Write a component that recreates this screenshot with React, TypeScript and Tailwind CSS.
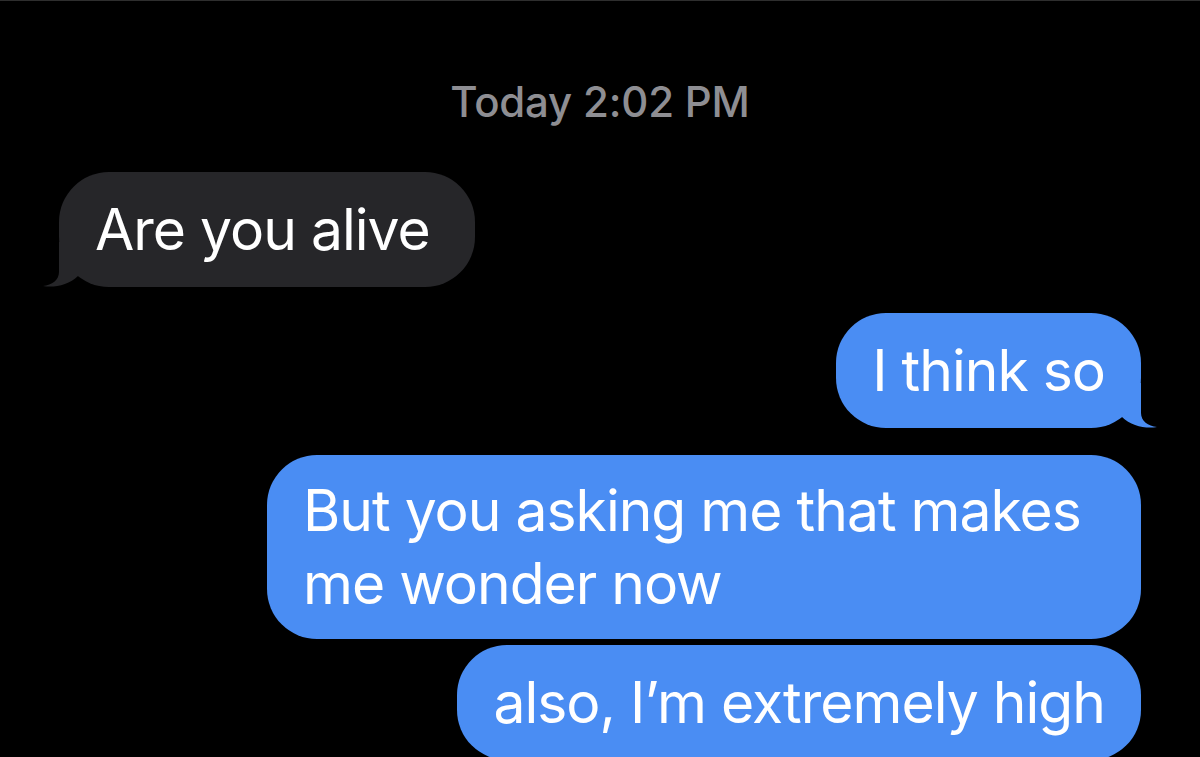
import React from "react";

type Msg = {
  text: React.ReactNode;
  mine: boolean;
  tail?: boolean;
  gap: string;
  width?: string;
  pad?: string;
};

const messages: Msg[] = [
  { text: "Are you alive", mine: false, tail: true, gap: "mt-[49px]", width: "w-[416px]" },
  { text: "I think so", mine: true, tail: true, gap: "mt-[26px]" },
  {
    text: (
      <>
        But you asking me that makes
        <br />
        me wonder now
      </>
    ),
    mine: true,
    gap: "mt-[27px]",
    width: "w-[874px]",
    pad: "py-[19px]",
  },
  { text: "also, I\u2019m extremely high", mine: true, gap: "mt-[6px]" },
];

function Tail({ color, side }: { color: string; side: "left" | "right" }) {
  const pos = side === "right" ? "-right-[16px] scale-x-100" : "-left-[16px] -scale-x-100";
  return (
    <svg
      viewBox="0 0 40 45"
      className={`absolute bottom-0 w-[40px] h-[45px] ${pos}`}
      aria-hidden
    >
      <path d="M5 0 H24 V30 C24 38 31 43 40 44 C29 46 14 43 5 34 Z" fill={color} />
    </svg>
  );
}

function Bubble({ msg }: { msg: Msg }) {
  const bg = msg.mine ? "#4a8df3" : "#262629";
  return (
    <div className={`flex ${msg.mine ? "justify-end" : "justify-start"} ${msg.gap}`}>
      <div
        className={`relative rounded-[50px] px-[36px] ${msg.pad ?? "py-[21px]"} text-white text-[57px] leading-[73px] tracking-[-1px] ${
          msg.width ?? ""
        } ${msg.mine ? "bg-[#4a8df3]" : "bg-[#262629]"}`}
      >
        {msg.tail && <Tail color={bg} side={msg.mine ? "right" : "left"} />}
        <span className="relative">{msg.text}</span>
      </div>
    </div>
  );
}

export default function App() {
  return (
    <div
      className="w-full h-[757px] bg-black border-t border-[#2e2e2e] overflow-hidden px-[59px]"
      style={{ fontFamily: "Inter, 'Noto Sans', sans-serif" }}
    >
      <div className="pt-[80px] text-center text-[42px] leading-[42px] font-medium text-[#8e8e93] tracking-[-0.2px]">
        Today 2:02 PM
      </div>
      {messages.map((m, i) => (
        <Bubble key={i} msg={m} />
      ))}
    </div>
  );
}
